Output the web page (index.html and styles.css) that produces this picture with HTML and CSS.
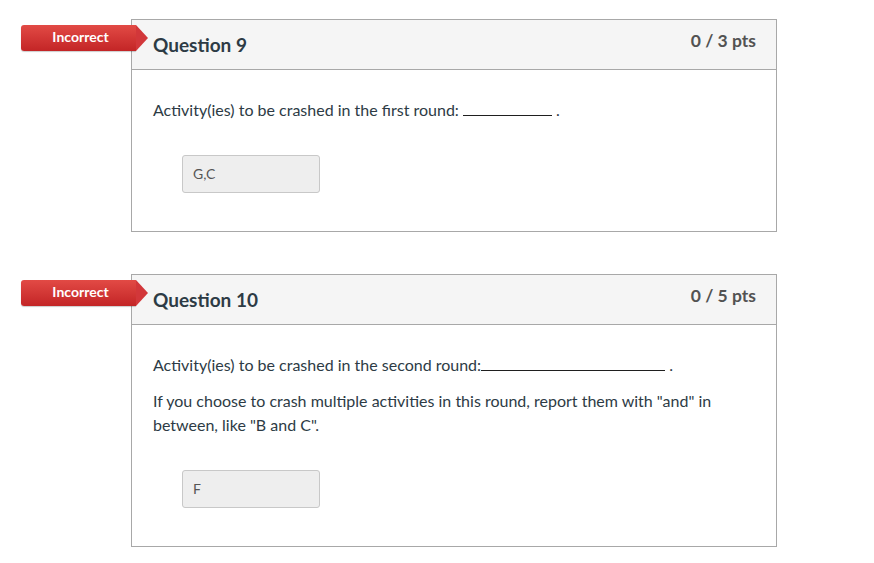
FILE: index.html
```html
<!DOCTYPE html>
<html>
<head>
<meta charset="utf-8">
<link rel="stylesheet" href="styles.css">
</head>
<body>
<div class="page">
  <div class="question">
    <div class="badge">Incorrect</div>
    <div class="q-header">
      <span class="q-title">Question 9</span>
      <span class="q-pts">0 / 3 pts</span>
    </div>
    <div class="q-body">
      <p>Activity(ies) to be crashed in the first round: <span class="blank b1"></span> .</p>
      <div class="answer">G,C</div>
    </div>
  </div>
  <div class="question">
    <div class="badge">Incorrect</div>
    <div class="q-header">
      <span class="q-title">Question 10</span>
      <span class="q-pts">0 / 5 pts</span>
    </div>
    <div class="q-body">
      <p>Activity(ies) to be crashed in the second round:<span class="blank b2"></span> .</p>
      <p>If you choose to crash multiple activities in this round, report them with "and" in between, like "B and C".</p>
      <div class="answer">F</div>
    </div>
  </div>
</div>
</body>
</html>
```
FILE: styles.css
```css
html, body {
  margin: 0;
  padding: 0;
  background: #fff;
}
body {
  font-family: Lato, "Open Sans", sans-serif;
  color: #2d3b45;
}
.page {
  padding: 19px 0 0 131px;
}
.question {
  position: relative;
  width: 644px;
  border: 1px solid #a8a8a8;
  margin-bottom: 42px;
}
.badge {
  position: absolute;
  left: -111px;
  top: 5px;
  width: 111px;
  padding-left: 4px;
  height: 26px;
  line-height: 24px;
  text-align: center;
  color: #fff;
  font-size: 14px;
  font-weight: 700;
  background: linear-gradient(#e24a45, #c32526);
  border-radius: 3px 0 0 3px;
  box-shadow: 0 1px 1px rgba(0,0,0,0.2);
}
.badge::after {
  content: "";
  position: absolute;
  right: -12px;
  top: 0;
  width: 0;
  height: 0;
  border-top: 13px solid transparent;
  border-bottom: 13px solid transparent;
  border-left: 12px solid #d2373a;
}
.q-header {
  display: flex;
  justify-content: space-between;
  align-items: flex-start;
  height: 49px;
  background: #f5f5f5;
  border-bottom: 1px solid #a8a8a8;
  padding: 0 20px 0 21px;
}
.q-title {
  font-size: 19px;
  font-weight: 700;
  margin-top: 13px;
  color: #2d3b45;
}
.q-pts {
  font-size: 17.5px;
  font-weight: 700;
  margin-top: 10px;
  color: #525252;
}
.q-body {
  padding: 28px 21px 38px 21px;
  font-size: 16px;
  line-height: 24px;
}
.q-body p {
  margin: 0 0 12px 0;
}
.blank {
  display: inline-block;
  border-bottom: 1px solid #1f1f1f;
  vertical-align: baseline;
  height: 1px;
}
.b1 { width: 89px; }
.b2 { width: 184px; }
.answer {
  margin: 33px 0 0 29px;
  width: 126px;
  height: 36px;
  padding-left: 10px;
  box-sizing: content-box;
  background: #eeeeee;
  border: 1px solid #c8c8c8;
  border-radius: 3px;
  font-size: 14px;
  line-height: 36px;
  color: #555;
}
```
